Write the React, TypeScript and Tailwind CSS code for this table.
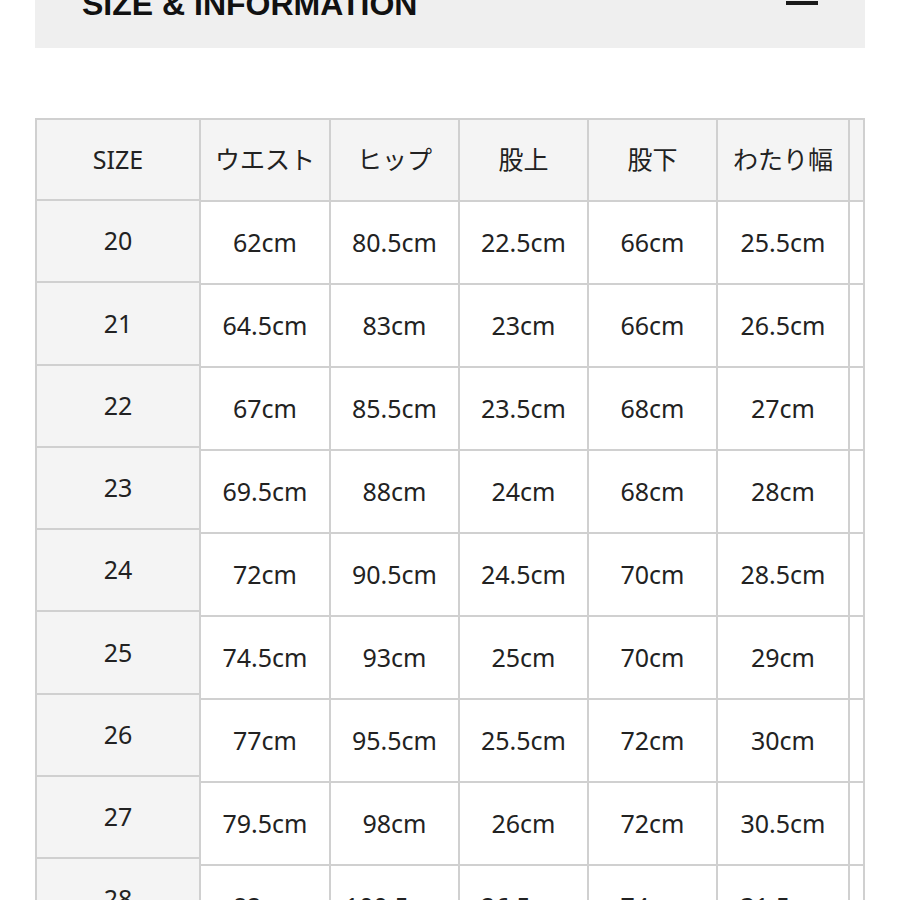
const HEADERS = ['ウエスト', 'ヒップ', '股上', '股下', 'わたり幅', '裾幅']

const ROWS: { size: string; values: string[] }[] = [
  { size: '20', values: ['62cm', '80.5cm', '22.5cm', '66cm', '25.5cm', '16cm'] },
  { size: '21', values: ['64.5cm', '83cm', '23cm', '66cm', '26.5cm', '16.5cm'] },
  { size: '22', values: ['67cm', '85.5cm', '23.5cm', '68cm', '27cm', '17cm'] },
  { size: '23', values: ['69.5cm', '88cm', '24cm', '68cm', '28cm', '17.5cm'] },
  { size: '24', values: ['72cm', '90.5cm', '24.5cm', '70cm', '28.5cm', '18cm'] },
  { size: '25', values: ['74.5cm', '93cm', '25cm', '70cm', '29cm', '18.5cm'] },
  { size: '26', values: ['77cm', '95.5cm', '25.5cm', '72cm', '30cm', '19cm'] },
  { size: '27', values: ['79.5cm', '98cm', '26cm', '72cm', '30.5cm', '19.5cm'] },
  { size: '28', values: ['82cm', '100.5cm', '26.5cm', '74cm', '31.5cm', '20cm'] },
]

const FONT = { fontFamily: '"Noto Sans", "Noto Sans CJK JP", sans-serif' }

export default function App() {
  return (
    <div className="min-h-[900px] w-[900px] overflow-hidden bg-white">
      <div className="-mt-[40px] mx-[35px] h-[88px] bg-[#efefef] flex items-center justify-between px-[47px]">
        <h2 className="text-[32px] font-bold text-[#111] leading-none tracking-[0px] font-['Liberation_Sans',Arial,sans-serif]">
          SIZE &amp; INFORMATION
        </h2>
        <span className="block w-[32px] h-[4px] bg-[#1a1a1a] mb-[3px]" />
      </div>

      <div
        className="mt-[70px] ml-[35px] w-[830px] flex border-t-2 border-x-2 border-[#d0d0d0] overflow-hidden text-[25px] text-[#222]"
        style={FONT}
      >
        {/* fixed SIZE column */}
        <div className="w-[164px] shrink-0 flex flex-col">
          <div className="h-[81px] flex items-center justify-center bg-[#f4f4f4] border-r-2 border-b-2 border-[#d0d0d0]">
            SIZE
          </div>
          {ROWS.map(r => (
            <div
              key={r.size}
              className="h-[82.25px] shrink-0 flex items-center justify-center bg-[#f4f4f4] border-r-2 border-b-2 border-[#d0d0d0]"
            >
              {r.size}
            </div>
          ))}
        </div>

        {/* scrolling part */}
        <div className="flex-1 overflow-hidden">
          <div className="grid grid-cols-[130px_129px_129px_129px_132px_130px] w-max">
            {HEADERS.map(h => (
              <div
                key={h}
                className="h-[82px] flex items-center justify-center whitespace-nowrap bg-[#f4f4f4] border-r-2 border-b-2 border-[#d0d0d0]"
              >
                {h}
              </div>
            ))}
            {ROWS.map(r =>
              r.values.map((v, i) => (
                <div
                  key={r.size + '-' + i}
                  className="h-[83px] flex items-center justify-center whitespace-nowrap bg-white border-r-2 border-b-2 border-[#d0d0d0]"
                >
                  {v}
                </div>
              ))
            )}
          </div>
        </div>
      </div>
    </div>
  )
}
